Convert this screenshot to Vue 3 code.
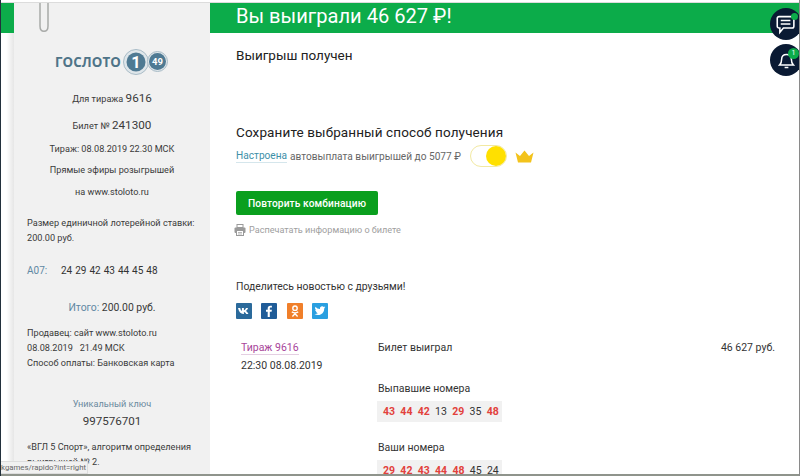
<script setup>
const drawn = [
  { n: 43, hit: true }, { n: 44, hit: true }, { n: 42, hit: true }, { n: 13, hit: false },
  { n: 29, hit: true }, { n: 35, hit: false }, { n: 48, hit: true }
]
const mine = [
  { n: 29, hit: true }, { n: 42, hit: true }, { n: 43, hit: true }, { n: 44, hit: true },
  { n: 48, hit: true }, { n: 45, hit: false }, { n: 24, hit: false }
]
</script>

<template>
  <div class="page">
    <div class="gutter"><div class="gutter-green"></div></div>

    <aside class="side">
      <div class="logo">
        <span class="logo-word">ГОСЛОТО</span>
        <svg class="logo-balls" width="46" height="28" viewBox="0 0 46 28">
          <circle cx="13" cy="14" r="12.5" fill="#dfe6ea" stroke="#a9bcc7" />
          <circle cx="13" cy="14" r="9.5" fill="#4f7a93" />
          <text x="13" y="20" text-anchor="middle" class="ball-big">1</text>
          <circle cx="34.500" cy="13.500" r="10" fill="#dfe6ea" stroke="#a9bcc7" />
          <circle cx="34.500" cy="13.500" r="8.500" fill="#4f7a93" />
          <text x="34.500" y="16.800" text-anchor="middle" class="ball-small">49</text>
        </svg>
      </div>
      <p class="center l1">Для тиража <span class="big">9616</span></p>
      <p class="center l2">Билет № <span class="big">241300</span></p>
      <p class="center l3">Тираж: 08.08.2019 22.30 МСК</p>
      <p class="center l4">Прямые эфиры розыгрышей</p>
      <p class="center l5">на www.stoloto.ru</p>
      <p class="stake">Размер единичной лотерейной ставки:<br />200.00 руб.</p>
      <div class="combo"><span class="combo-key">А07:</span><span class="combo-nums">24 29 42 43 44 45 48</span></div>
      <p class="center total"><span class="muted">Итого:</span> 200.00 руб.</p>
      <p class="seller">Продавец: сайт www.stoloto.ru<br />08.08.2019 &nbsp; 21.49 МСК<br />Способ оплаты: Банковская карта</p>
      <p class="center key-label">Уникальный ключ</p>
      <p class="center key-value">997576701</p>
      <p class="legal">«ВГЛ 5 Спорт», алгоритм определения<br />выигрышей № 2.<br />Носитель: Минимальная ставка</p>
    </aside>

    <main class="main">
      <div class="banner">Вы выиграли 46 627 ₽!</div>
      <div class="content">
        <h2 class="received">Выигрыш получен</h2>
        <h2 class="save">Сохраните выбранный способ получения</h2>
        <div class="auto">
          <span class="auto-link">Настроена</span>
          <span class="auto-text">автовыплата выигрышей до 5077 ₽</span>
          <span class="toggle"><span class="knob"></span></span>
          <svg class="crown" width="19" height="13" viewBox="0 0 19 13">
            <path d="M0.5 2.5 L5 6 L9.5 0.5 L14 6 L18.5 2.5 L16 12.5 L3 12.5 Z" fill="#f3c31c" />
          </svg>
        </div>
        <button class="repeat">Повторить комбинацию</button>
        <div class="print">
          <svg width="12" height="12" viewBox="0 0 12 12" fill="#9a9a9a">
            <rect x="3" y="0.5" width="6" height="3" fill="none" stroke="#9a9a9a" />
            <rect x="0.5" y="3.5" width="11" height="5.5" rx="1" />
            <rect x="2.5" y="6.5" width="7" height="5" fill="#fff" stroke="#9a9a9a" />
            <path d="M4 8.5h4M4 10h4" stroke="#9a9a9a" stroke-width="0.7" />
          </svg>
          <span>Распечатать информацию о билете</span>
        </div>
        <p class="share">Поделитесь новостью с друзьями!</p>
        <div class="socials">
          <svg class="soc" width="16" height="16" viewBox="0 0 16 16">
            <rect width="16" height="16" rx="1" fill="#2b6a9b" />
            <path d="M2 5h2.200c.3 1.500 1 2.700 1.700 3V5h2v2.300C8.900 7 9.600 6 10 5h2c-.3 1.300-1.200 2.300-2 2.900.9.500 1.900 1.500 2.400 3.100h-2.200C9.800 9.900 9 9.200 7.900 9v2h-.6C4.800 11 2.800 8.700 2 5z" fill="#fff" />
          </svg>
          <svg class="soc" width="16" height="16" viewBox="0 0 16 16">
            <rect width="16" height="16" rx="1" fill="#1f5c98" />
            <path d="M8.800 14V8.800h1.800l.3-2H8.800V5.600c0-.6.2-1 1-1h1.100V2.800c-.3 0-.9-.1-1.600-.1-1.600 0-2.600 1-2.600 2.700v1.400H5v2h1.700V14z" fill="#fff" />
          </svg>
          <svg class="soc" width="16" height="16" viewBox="0 0 16 16">
            <rect width="16" height="16" rx="1" fill="#f07f2a" />
            <circle cx="8" cy="5.200" r="2.200" fill="none" stroke="#fff" stroke-width="1.400" />
            <path d="M4.800 8.800c2 1.300 4.400 1.300 6.400 0M8 9.800v1M5.400 13.400 8 10.800l2.600 2.600" fill="none" stroke="#fff" stroke-width="1.400" />
          </svg>
          <svg class="soc" width="16" height="16" viewBox="0 0 16 16">
            <rect width="16" height="16" rx="1" fill="#2a9fe0" />
            <path d="M13.500 4.300c-.4.2-.8.300-1.300.4.500-.3.800-.7 1-1.200-.4.300-.9.400-1.400.5a2.200 2.200 0 0 0-3.800 2A6.300 6.300 0 0 1 3.400 3.700a2.200 2.200 0 0 0 .7 3c-.4 0-.7-.1-1-.3 0 1.100.8 2 1.800 2.200-.3.100-.7.100-1 0 .3.900 1.100 1.500 2.100 1.500A4.500 4.500 0 0 1 2.500 11a6.300 6.300 0 0 0 9.700-5.600c.5-.3.900-.7 1.300-1.100z" fill="#fff" />
          </svg>
        </div>
        <div class="draw">
          <div class="draw-left">
            <span class="draw-link">Тираж 9616</span>
            <span class="draw-time">22:30 08.08.2019</span>
          </div>
          <div class="draw-right">
            <div class="result"><span>Билет выиграл</span><span>46 627 руб.</span></div>
            <div class="nums-title first">Выпавшие номера</div>
            <div class="nums">
              <span v-for="d in drawn" :key="d.n" :class="{ hit: d.hit }">{{ d.n }}</span>
            </div>
            <div class="nums-title second">Ваши номера</div>
            <div class="nums">
              <span v-for="d in mine" :key="d.n" :class="{ hit: d.hit }">{{ d.n }}</span>
            </div>
          </div>
        </div>
      </div>
    </main>

    <svg class="clip" width="12" height="30" viewBox="0 0 12 30">
      <path d="M2 0 V23 C2 30 10 30 10 23 V0" fill="none" stroke="#a8aaa8" stroke-width="1.500" />
    </svg>

    <div class="fab fab-chat">
      <svg width="20" height="21" viewBox="0 0 22 24" fill="none" stroke="#fff" stroke-width="1.800">
        <path d="M3 3h15a2 2 0 0 1 2 2v9a2 2 0 0 1-2 2H8l-4 5v-5H3a2 2 0 0 1-2-2V5a2 2 0 0 1 2-2z" />
        <path d="M5 7.500h11M5 11.500h11" />
      </svg>
      <span class="dot"></span>
    </div>
    <div class="fab fab-bell">
      <svg width="17" height="18" viewBox="0 0 22 24" fill="none" stroke="#fff" stroke-width="2">
        <path d="M2 18.500c2-2 2.500-4 2.500-7.500 0-4 2.500-6.500 6.500-6.500s6.500 2.500 6.500 6.500c0 3.500.5 5.500 2.500 7.500z" />
        <path d="M8.500 22h5" />
      </svg>
      <span class="dot count">1</span>
    </div>

    <div class="status">kgames/rapido?int=right</div>
    <div class="bottom-edge"></div>
  </div>
</template>

<style>
html, body { margin: 0; background: #fff; }
</style>

<style scoped>
.page {
  position: relative;
  display: flex;
  width: 800px;
  height: 476px;
  padding-top: 3px;
  box-sizing: border-box;
  overflow: hidden;
  font-family: Roboto, "Liberation Sans", sans-serif;
  color: #333;
  background: linear-gradient(#fff 2px, #dcdcdc 2px, #dcdcdc 3px, #fff 3px);
  border-left: 1px solid #22303c;
  border-right: 1px solid #8a8a8a;
}
p, h2 { margin: 0; font-weight: 400; }
.gutter { width: 13px; flex: none; background: linear-gradient(to right, #fff 40%, #e6e6e6); }
.gutter-green { height: 30px; background: #0cac4a; }

.side {
  width: 196px;
  flex: none;
  background: #f1f1f1;
  font-size: 9.150px;
  line-height: 15px;
  color: #3a3a3a;
  padding-top: 45px;
  box-sizing: border-box;
}
.logo { display: flex; justify-content: center; align-items: center; gap: 2px; height: 28px; }
.logo-word { font-family: "Open Sans", "Liberation Sans", sans-serif; font-size: 13.300px; font-weight: 700; color: #4f7488; letter-spacing: 0.1px; }
.ball-big { font: 700 16.500px Roboto, sans-serif; fill: #fff; }
.ball-small { font: 700 9.500px Roboto, sans-serif; fill: #fff; }
.center { text-align: center; }
.big { font-size: 11.700px; }
.l1 { margin-top: 15px; }
.l2 { margin-top: 11px; }
.l3 { margin-top: 8px; }
.l4 { margin-top: 6px; }
.l5 { margin-top: 7px; }
.stake { margin: 16px 0 0 13px; }
.combo { display: flex; margin: 17px 0 0 13px; font-size: 10px; }
.combo-key { width: 34px; color: #5f88a3; }
.combo-nums { color: #333; word-spacing: 0.5px; }
.total { margin-top: 22px; font-size: 10.400px; }
.muted { color: #5f88a3; }
.seller { margin: 11px 0 0 13px; }
.key-label { margin-top: 26px; color: #6b8a9e; }
.key-value { margin-top: 2px; font-size: 11.600px; }
.legal { margin: 11px 0 0 13px; line-height: 14.500px; }

.main { flex: 1; min-width: 0; }
.banner {
  height: 30px;
  line-height: 27px;
  padding-left: 26px;
  background: #0cac4a;
  color: #fff;
  font-size: 20.100px;
}
.content { padding: 14px 24px 0 26px; }
.received { font-size: 13.500px; line-height: 16px; color: #222; }
.save { margin-top: 61px; font-size: 13.500px; line-height: 16px; color: #222; letter-spacing: 0.12px; }
.auto { display: flex; align-items: center; height: 22px; margin-top: 5px; font-size: 10.150px; }
.auto-link { color: #3d8fa8; border-bottom: 1px solid #d5e6ec; line-height: 12px; }
.auto-text { margin-left: 3px; color: #666; }
.toggle {
  display: flex;
  justify-content: flex-end;
  align-items: center;
  width: 37px;
  height: 22px;
  margin-left: 9px;
  border: 1px solid #f2e9a2;
  border-radius: 11px;
  box-sizing: border-box;
}
.knob { width: 20px; height: 20px; border-radius: 50%; background: #ffe000; }
.crown { margin-left: 8px; }
.repeat {
  display: block;
  width: 142px;
  height: 24px;
  margin-top: 24px;
  padding: 0;
  border: 0;
  border-radius: 2px;
  background: #0a9f1e;
  color: #fff;
  font: 500 10.200px Roboto, sans-serif;
  letter-spacing: 0.1px;
}
.print { display: flex; align-items: center; gap: 3px; margin-top: 8px; margin-left: -2px; height: 13px; font-size: 9.100px; color: #a0a0a0; }
.share { margin-top: 44px; font-size: 10.400px; line-height: 14px; color: #333; }
.socials { display: flex; gap: 9.300px; margin-top: 9px; }
.soc { display: block; }
.draw { display: flex; margin-top: 22px; }
.draw-left { width: 142px; flex: none; display: flex; flex-direction: column; align-items: flex-start; font-size: 10.500px; padding-left: 5px; box-sizing: border-box; }
.draw-link { color: #a8459a; border-bottom: 1px solid #e4cfe2; line-height: 13px; }
.draw-time { margin-top: 4px; line-height: 14px; }
.draw-right { flex: 1; font-size: 10.500px; }
.result { display: flex; justify-content: space-between; line-height: 14px; }
.nums-title { line-height: 14px; }
.first { margin-top: 27px; }
.second { margin-top: 19px; }
.nums {
  display: flex;
  gap: 5.300px;
  width: max-content;
  height: 21px;
  margin-top: 5px;
  margin-left: -1px;
  padding: 0 3.500px 0 6px;
  align-items: center;
  background: #f1f1f1;
  font-size: 10.500px;
}
.nums span { color: #333; }
.nums .hit { color: #e2413c; font-weight: 700; }

.clip { position: absolute; left: 37px; top: 3px; }
.fab {
  position: absolute;
  left: 769px;
  width: 32px;
  height: 32px;
  border-radius: 50%;
  background: #0a1a33;
  display: flex;
  align-items: center;
  justify-content: center;
}
.fab-chat { top: 8px; }
.fab-bell { top: 44px; }
.dot {
  position: absolute;
  top: 5px;
  right: 4px;
  width: 7px;
  height: 7px;
  border-radius: 50%;
  background: #0cac4a;
}
.count {
  top: 4px;
  right: 3px;
  width: 11px;
  height: 11px;
  font-size: 7px;
  line-height: 11px;
  text-align: center;
  color: #fff;
}
.status {
  position: absolute;
  left: -1px;
  bottom: 2px;
  width: 88px;
  height: 13px;
  line-height: 12px;
  background: #f1f1f1;
  border: 1px solid #ddd;
  box-sizing: border-box;
  font-size: 7.800px;
  color: #666;
  overflow: hidden;
  white-space: nowrap;
}
.bottom-edge { position: absolute; left: -1px; right: -1px; bottom: 0; height: 2px; background: #8f948c; }
</style>
